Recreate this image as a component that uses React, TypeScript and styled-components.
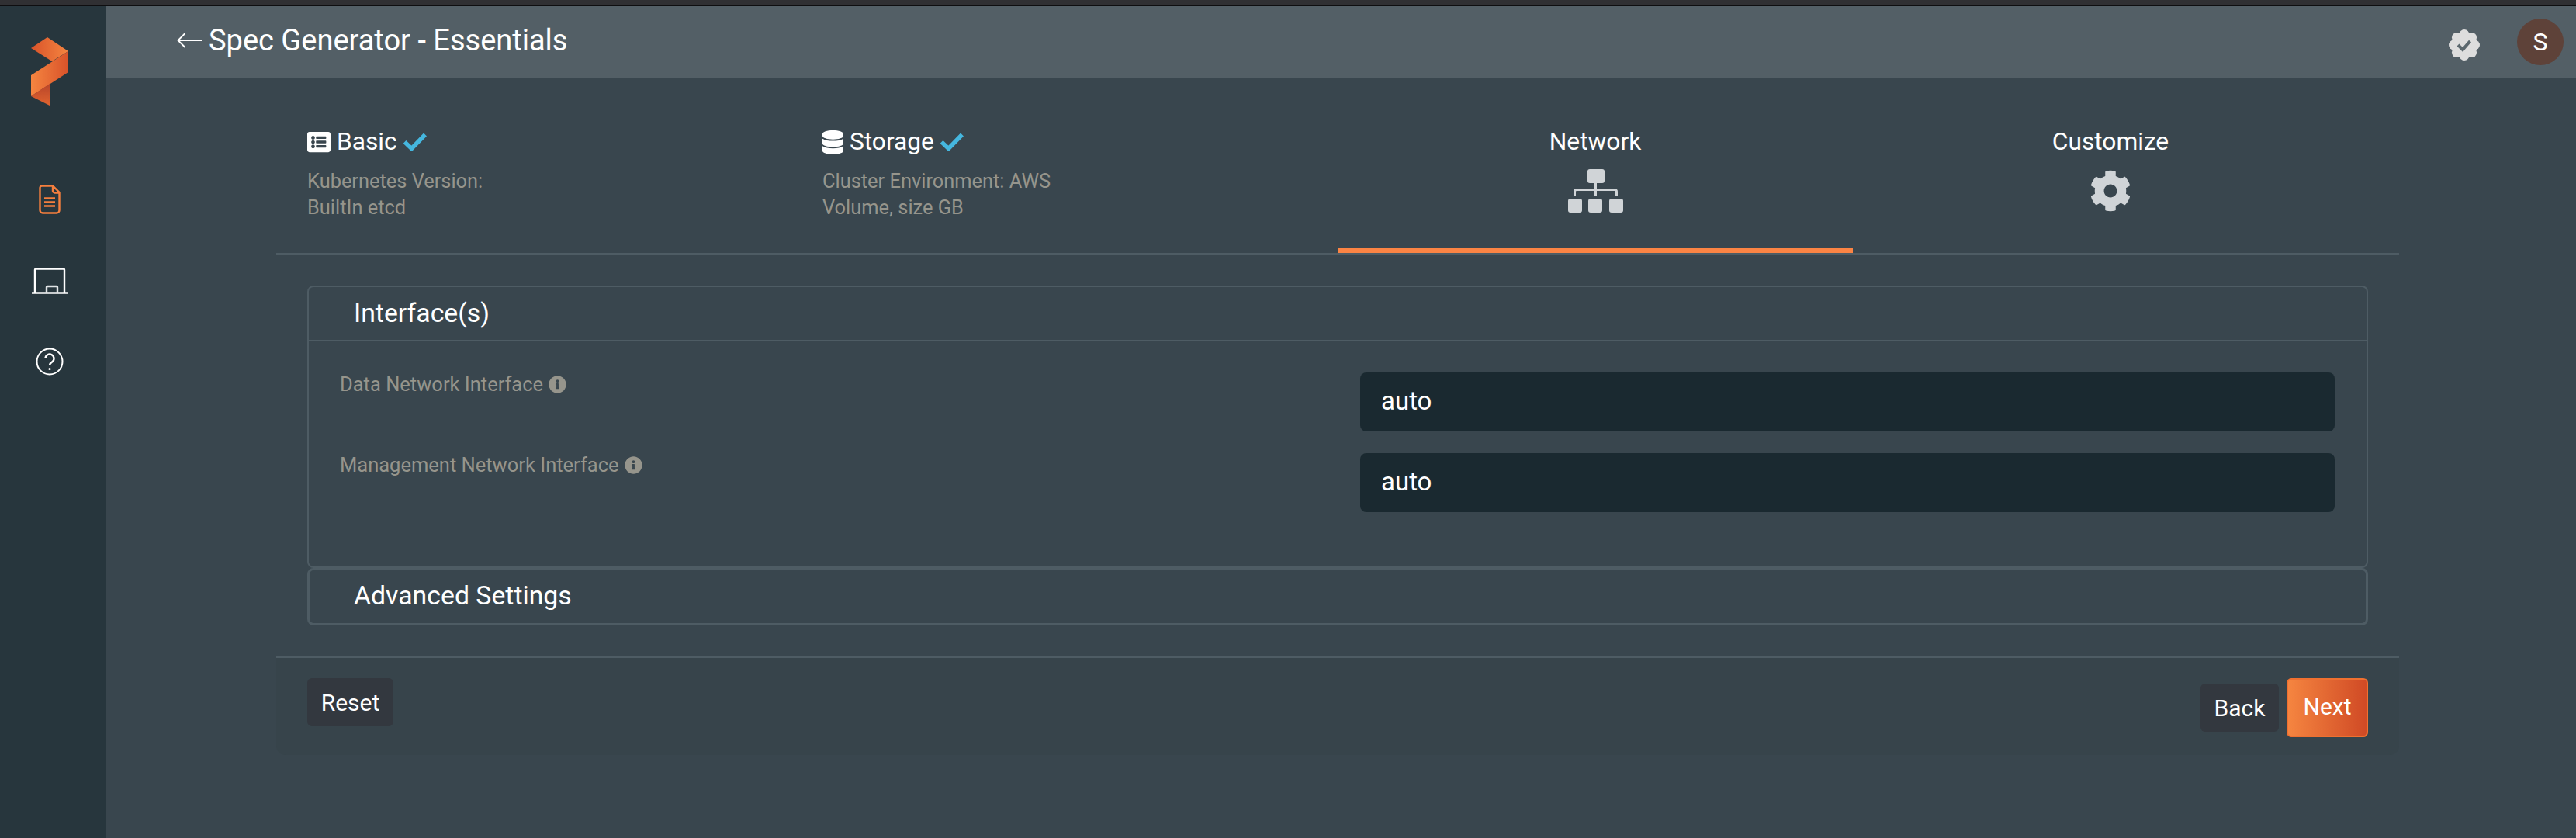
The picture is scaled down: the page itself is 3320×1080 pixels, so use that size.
import React from 'react';
import styled, { createGlobalStyle } from 'styled-components';
import { FaCog, FaDatabase, FaInfoCircle, FaListAlt } from 'react-icons/fa';

const GlobalStyle = createGlobalStyle`
  html, body {
    margin: 0;
    padding: 0;
    background: #39464e;
    font-family: "Roboto", "Liberation Sans", sans-serif;
  }
  * { box-sizing: border-box; }
`;

const Page = styled.div`
  width: 3320px;
  height: 1080px;
  display: flex;
  flex-direction: column;
  overflow: hidden;
  background: #39464e;
`;

const WindowEdge = styled.div`
  height: 8px;
  flex: none;
  background: #303033;
  border-bottom: 2px solid #0e0e10;
`;

const Shell = styled.div`
  flex: 1;
  display: flex;
`;

const Sidebar = styled.aside`
  width: 136px;
  flex: none;
  display: flex;
  flex-direction: column;
  align-items: center;
  background: #27363d;
  padding: 40px 8px 0 0;
`;

const NavItems = styled.nav`
  margin-top: 102px;
  display: flex;
  flex-direction: column;
  align-items: center;
  gap: 69px;
`;

const Main = styled.main`
  flex: 1;
  min-width: 0;
`;

const Header = styled.header`
  height: 92px;
  background: #535f66;
  display: flex;
  align-items: flex-start;
  justify-content: space-between;
  padding: 16px 16px 0 92px;
  color: #fff;
`;

const TitleGroup = styled.div`
  display: flex;
  align-items: center;
  gap: 9px;
  height: 56px;
`;

const Title = styled.h1`
  margin: 0;
  font-size: 38px;
  font-weight: 400;
`;

const HeaderActions = styled.div`
  display: flex;
  align-items: flex-start;
  gap: 48px;
`;

const BadgeSlot = styled.div`
  margin-top: 14px;
  height: 40px;
`;

const Avatar = styled.div`
  width: 60px;
  height: 60px;
  border-radius: 50%;
  background: #5e4239;
  display: flex;
  align-items: center;
  justify-content: center;
  font-size: 32px;
  color: #fff;
`;

const Wizard = styled.section`
  margin-left: 220px;
  width: 2736px;
`;

const Steps = styled.div`
  display: grid;
  grid-template-columns: repeat(4, 664px);
  padding: 0 40px;
  height: 228px;
  border-bottom: 2px solid #4e5c64;
`;

const Step = styled.div<{ $active?: boolean; $center?: boolean }>`
  height: 226px;
  padding-top: 64px;
  display: flex;
  flex-direction: column;
  align-items: ${(p) => (p.$center ? 'center' : 'flex-start')};
  border-bottom: 6px solid ${(p) => (p.$active ? '#fb8444' : 'transparent')};
`;

const StepHead = styled.div`
  display: flex;
  align-items: center;
  gap: 8px;
  font-size: 31.7px;
  line-height: 38px;
  color: #fff;
  svg { flex: none; }
`;

const StorageIcon = styled(FaDatabase)`
  width: 27px;
  height: 31px;
`;

const StepDesc = styled.div`
  margin-top: 14px;
  font-size: 25.4px;
  line-height: 34px;
  color: #96958c;
`;

const StepIcon = styled.div`
  margin-top: 16px;
  height: 56px;
  display: flex;
  align-items: center;
  color: #d0d4d7;
`;

const Panels = styled.div`
  padding: 40px 40px 0;
`;

const Panel = styled.div`
  border: 2px solid #4e5c64;
  border-radius: 8px;
`;

const SettingsPanel = styled(Panel)`
  border-width: 3px;
  height: 74px;
  padding: 0 0 4px 57px;
  display: flex;
  align-items: center;
`;

const PanelHead = styled.div`
  height: 70px;
  padding: 0 0 2px 58px;
  border-bottom: 2px solid #4e5c64;
  display: flex;
  align-items: center;
`;

const PanelTitle = styled.h2`
  margin: 0;
  font-size: 33.8px;
  font-weight: 400;
  color: #fff;
`;

const PanelBody = styled.div`
  height: 290px;
  padding: 40px 40px 0;
  display: flex;
  flex-direction: column;
  gap: 28px;
`;

const Field = styled.div`
  display: grid;
  grid-template-columns: 1315px 1256px;
  height: 76px;
`;

const FieldLabel = styled.label`
  display: flex;
  align-items: center;
  gap: 7px;
  height: 30px;
  font-size: 25.5px;
  color: #96958c;
`;

const TextBox = styled.input`
  width: 100%;
  height: 76px;
  border: none;
  border-radius: 8px;
  background: #1a2930;
  color: #fff;
  font-family: inherit;
  font-size: 33px;
  padding: 0 27px 3px;
  outline: none;
`;

const Footer = styled.footer`
  margin-top: 40px;
  height: 127px;
  border-top: 2px solid #4e5c64;
  border-radius: 0 0 12px 12px;
  background: #37444b;
  display: flex;
  justify-content: space-between;
  align-items: flex-start;
  padding: 26px 40px 0;
`;

const Button = styled.button`
  height: 62px;
  padding: 0;
  border: none;
  border-radius: 6px;
  background: #33383f;
  color: #fff;
  font-family: inherit;
  font-size: 30px;
`;

const ResetButton = styled(Button)`
  width: 111px;
`;

const FooterRight = styled.div`
  display: flex;
  align-items: flex-start;
  gap: 10px;
`;

const BackButton = styled(Button)`
  margin-top: 7px;
  width: 101px;
`;

const NextButton = styled(Button)`
  width: 105px;
  height: 76px;
  padding-bottom: 4px;
  border: 2px solid #f07030;
  background: linear-gradient(90deg, #f58540, #d04a25);
`;

const Logo = () => (
  <svg width="48" height="88" viewBox="0 0 48 88">
    <defs>
      <linearGradient id="lg-a" x1="0" x2="1">
        <stop offset="0" stopColor="#d9532a" />
        <stop offset="1" stopColor="#f58540" />
      </linearGradient>
      <linearGradient id="lg-b" x1="0" x2="1">
        <stop offset="0" stopColor="#f58540" />
        <stop offset="1" stopColor="#d9532a" />
      </linearGradient>
      <linearGradient id="lg-c" x1="0" x2="0" y1="0" y2="1">
        <stop offset="0" stopColor="#b8452a" />
        <stop offset="1" stopColor="#e0642f" />
      </linearGradient>
    </defs>
    <path d="M0 14 21 0 48 18 27 31Z" fill="url(#lg-a)" />
    <path d="M0 49 48 18V45L0 76Z" fill="url(#lg-b)" />
    <path d="M0 76 24 60V88Z" fill="url(#lg-c)" />
  </svg>
);

const DocIcon = () => (
  <svg width="28" height="38" viewBox="0 0 28 38" fill="none" stroke="#f57f3e" strokeWidth="2.4">
    <path d="M4 1.5H18L26.5 10V33a3.5 3.5 0 0 1-3.5 3.5H5A3.5 3.5 0 0 1 1.500 33V4A2.500 2.500 0 0 1 4 1.500Z" />
    <path d="M18 1.500V8a2.500 2.500 0 0 0 2.500 2.500H26.500" />
    <path d="M7 17.500H21M7 22.500H21M7 27.500H21" />
  </svg>
);

const BoardIcon = () => (
  <svg width="46" height="34" viewBox="0 0 46 34" fill="none" stroke="#fff" strokeWidth="2.400">
    <path d="M4 32V3a1.500 1.500 0 0 1 1.500-1.500h35A1.500 1.500 0 0 1 42 3V32" />
    <path d="M0 32.500H46" />
    <path d="M19 32V25.500a1.500 1.500 0 0 1 1.500-1.500h11a1.500 1.500 0 0 1 1.500 1.500V32" stroke="#dfe3e5" />
  </svg>
);

const HelpIcon = () => (
  <svg width="36" height="36" viewBox="0 0 36 36" fill="none" stroke="#fff" strokeWidth="2">
    <circle cx="18" cy="18" r="16.500" />
    <path d="M12.500 14a5.500 5.500 0 1 1 8.300 4.700c-1.800 1.100-2.800 2.300-2.800 4.300" strokeWidth="2.400" />
    <circle cx="18" cy="27.500" r="1.600" fill="#fff" stroke="none" />
  </svg>
);

const BackArrow = () => (
  <svg width="32" height="20" viewBox="0 0 32 20" fill="none" stroke="#fff" strokeWidth="1.800">
    <path d="M32 10H2M10.500 1 1.500 10 10.500 19" />
  </svg>
);

const Tick = () => (
  <svg width="30" height="24" viewBox="0 0 30 24" fill="none" stroke="#45b7df" strokeWidth="5.500">
    <path d="M1.500 12 10.500 20.500 28 2.500" />
  </svg>
);

const VerifiedBadge = () => {
  const lobes = [0, 45, 90, 135, 180, 225, 270, 315];
  return (
    <svg width="40" height="40" viewBox="0 0 40 40">
      {lobes.map((deg) => (
        <circle
          key={deg}
          cx={20 + 13.500 * Math.cos((deg * Math.PI) / 180)}
          cy={20 + 13.500 * Math.sin((deg * Math.PI) / 180)}
          r="6.500"
          fill="#dddddd"
        />
      ))}
      <circle cx="20" cy="20" r="14" fill="#dddddd" />
      <path d="M12 20 18 26 27.500 15" fill="none" stroke="#5b686e" strokeWidth="4" />
    </svg>
  );
};

const SitemapIcon = () => (
  <svg width="71" height="56" viewBox="0 0 71 56" fill="currentColor">
    <rect x="25" y="0" width="22" height="18" rx="3" />
    <rect x="0" y="38" width="18" height="18" rx="3" />
    <rect x="26" y="38" width="18" height="18" rx="3" />
    <rect x="53" y="38" width="18" height="18" rx="3" />
    <path d="M34 18h3v7h23a4 4 0 0 1 4 4v6h-3v-6a1 1 0 0 0-1-1H37v7h-3v-7H11a1 1 0 0 0-1 1v6H7v-6a4 4 0 0 1 4-4h23Z" />
  </svg>
);

export default function App() {
  return (
    <Page>
      <GlobalStyle />
      <WindowEdge />
      <Shell>
        <Sidebar>
          <Logo />
          <NavItems>
            <DocIcon />
            <BoardIcon />
            <HelpIcon />
          </NavItems>
        </Sidebar>
        <Main>
          <Header>
            <TitleGroup>
              <BackArrow />
              <Title>Spec Generator - Essentials</Title>
            </TitleGroup>
            <HeaderActions>
              <BadgeSlot>
                <VerifiedBadge />
              </BadgeSlot>
              <Avatar>S</Avatar>
            </HeaderActions>
          </Header>
          <Wizard>
            <Steps>
              <Step>
                <StepHead>
                  <FaListAlt size={30} />
                  Basic
                  <Tick />
                </StepHead>
                <StepDesc>
                  Kubernetes Version:
                  <br />
                  BuiltIn etcd
                </StepDesc>
              </Step>
              <Step>
                <StepHead>
                  <StorageIcon />
                  Storage
                  <Tick />
                </StepHead>
                <StepDesc>
                  Cluster Environment: AWS
                  <br />
                  Volume, size GB
                </StepDesc>
              </Step>
              <Step $active $center>
                <StepHead>Network</StepHead>
                <StepIcon>
                  <SitemapIcon />
                </StepIcon>
              </Step>
              <Step $center>
                <StepHead>Customize</StepHead>
                <StepIcon>
                  <FaCog size={54} />
                </StepIcon>
              </Step>
            </Steps>
            <Panels>
              <Panel>
                <PanelHead>
                  <PanelTitle>Interface(s)</PanelTitle>
                </PanelHead>
                <PanelBody>
                  <Field>
                    <FieldLabel>
                      Data Network Interface <FaInfoCircle size={23} />
                    </FieldLabel>
                    <TextBox defaultValue="auto" />
                  </Field>
                  <Field>
                    <FieldLabel>
                      Management Network Interface <FaInfoCircle size={23} />
                    </FieldLabel>
                    <TextBox defaultValue="auto" />
                  </Field>
                </PanelBody>
              </Panel>
              <SettingsPanel>
                <PanelTitle>Advanced Settings</PanelTitle>
              </SettingsPanel>
            </Panels>
            <Footer>
              <ResetButton>Reset</ResetButton>
              <FooterRight>
                <BackButton>Back</BackButton>
                <NextButton>Next</NextButton>
              </FooterRight>
            </Footer>
          </Wizard>
        </Main>
      </Shell>
    </Page>
  );
}
